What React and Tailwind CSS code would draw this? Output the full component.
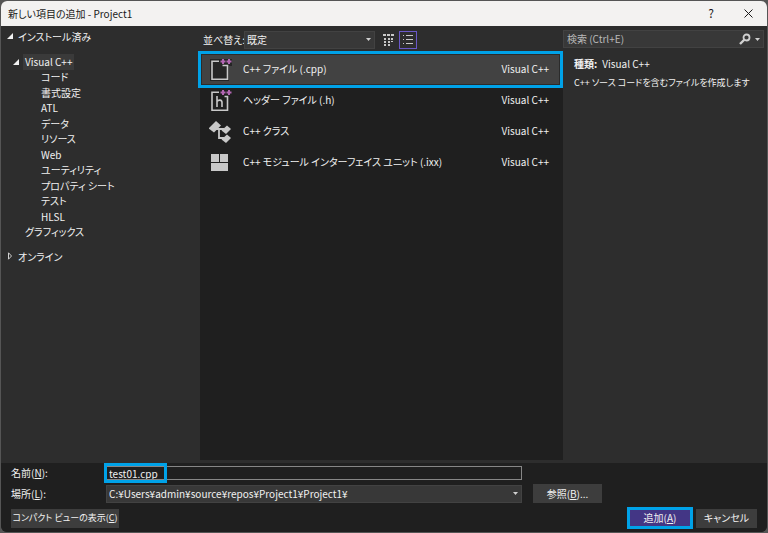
import React, { useState } from 'react'
import clsx from 'clsx'

const categories = [
    'コード',
    '書式設定',
    'ATL',
    'データ',
    'リソース',
    'Web',
    'ユーティリティ',
    'プロパティ シート',
    'テスト',
    'HLSL',
]

const templates = [
    { id: 'cpp', label: 'C++ ファイル (.cpp)', lang: 'Visual C++', icon: CppFileIcon },
    { id: 'header', label: 'ヘッダー ファイル (.h)', lang: 'Visual C++', icon: HeaderFileIcon },
    { id: 'class', label: 'C++ クラス', lang: 'Visual C++', icon: ClassIcon },
    { id: 'module', label: 'C++ モジュール インターフェイス ユニット (.ixx)', lang: 'Visual C++', icon: ModuleIcon },
]

function PlusPlus() {
    return (
        <path d="M11.5 3.5h5M14 1v5M17.5 3.5h5M20 1v5" stroke="#b266b2" strokeWidth="2" />
    )
}

function CppFileIcon() {
    return (
        <svg viewBox="0 0 24 24" className="size-6" fill="none">
            <path d="M1 1H23V8H20V23H1Z" fill="#252525" />
            <path d="M10 3.2H3V21.2H18.5V7.5H13.5" stroke="#c8c8c8" strokeWidth="1.6" />
            <PlusPlus />
        </svg>
    )
}

function HeaderFileIcon() {
    return (
        <svg viewBox="0 0 24 24" className="size-6" fill="none">
            <path d="M10 3.2H3V21.2H18.5V7.5H15.5" stroke="#c8c8c8" strokeWidth="1.6" />
            <path d="M8 7V18M8 12.5C9.5 10.5 13 10.5 13 13.5V18" stroke="#c8c8c8" strokeWidth="1.6" />
            <PlusPlus />
        </svg>
    )
}

function ClassIcon() {
    return (
        <svg viewBox="0 0 24 24" className="size-6">
            <path d="M-0.5 8.5L7 1L12 5.5L5 12.5Z" fill="#c8c8c8" />
            <path d="M12.5 10.5L18 5.5L22 9L17 14Z" fill="#c8c8c8" />
            <path d="M12.5 19.5L18 14.5L22 18L17 23Z" fill="#c8c8c8" />
            <path d="M7 9H15M10 9V18H15" fill="none" stroke="#c8c8c8" strokeWidth="1.8" />
        </svg>
    )
}

function ModuleIcon() {
    return (
        <svg viewBox="0 0 24 24" className="size-6" fill="#c8c8c8">
            <rect x="2" y="3" width="8" height="8" />
            <rect x="11" y="3" width="8" height="8" />
            <rect x="2" y="12" width="17" height="8" />
        </svg>
    )
}

function GridViewIcon() {
    return (
        <svg viewBox="0 0 12 12" className="size-3" fill="#c8c8c8">
            <path d="M0 0h3v2H0zM4 0h3v2H4zM8 0h3v2H8zM1 4h2v2H1zM5 4h2v2H5zM8 4h2v2H8zM1 7h2v2H1zM5 7h2v2H5zM1 10h2v2H1zM5 10h2v2H5zM8 7h2v1H8z" />
        </svg>
    )
}

function ListViewIcon() {
    return (
        <svg viewBox="0 0 10 9" className="w-2.5 h-[9px]" fill="#c8c8c8">
            <path d="M0 0h1v1H0zM3 0h7v1H3zM0 4h1v1H0zM3 4h7v1H3zM0 8h1v1H0zM3 8h7v1H3z" />
        </svg>
    )
}

function SearchIcon() {
    return (
        <svg viewBox="0 0 12 12" className="size-3" fill="none" stroke="#d0d0d0">
            <circle cx="7.5" cy="4.5" r="3" strokeWidth="1.8" />
            <path d="M5.5 6.5L1 11" strokeWidth="2.4" />
        </svg>
    )
}

function DownArrow({ className }) {
    return (
        <svg viewBox="0 0 5 3" className={clsx('w-[5px] h-[3px]', className)} fill="#d0d0d0">
            <path d="M0 0H5L2.5 3Z" />
        </svg>
    )
}

function TreeArrow({ open }) {
    return (
        <svg viewBox="0 0 8 8" className="size-2 shrink-0">
            {open
                ? <path d="M7 1V7H1Z" fill="#f1f1f1" />
                : <path d="M2.5 0.8V7.2L5.5 4Z" fill="none" stroke="#d0d0d0" />}
        </svg>
    )
}

// Drop-down with its own arrow
function Dropdown({ id, options, className }) {
    return (
        <div className={clsx('relative', className)}>
            <select id={id} className="block w-full h-[18px] appearance-none bg-[#383838] border border-[#424242] pl-0.5 pr-4 pb-px leading-4">
                {options.map((o) => <option key={o}>{o}</option>)}
            </select>
            <DownArrow className="absolute right-1 top-[7px] pointer-events-none" />
        </div>
    )
}

function Sidebar() {
    return (
        <nav className="pl-[5px] pt-0.5">
            <button className="flex items-center gap-1 h-4">
                <TreeArrow open /> インストール済み
            </button>
            <ul className="grid grid-rows-12 h-[186px] mt-[10px] ml-[6px] items-center">
                <li className="flex items-center gap-[3px]">
                    <TreeArrow open />
                    <button className="h-4 leading-4 px-0.5 bg-[#3a3a3a]">Visual C++</button>
                </li>
                {categories.map((c) => (
                    <li key={c} className="flex pl-[29px]">
                        <button className="leading-4">{c}</button>
                    </li>
                ))}
                <li className="flex pl-[13px]">
                    <button className="leading-4">グラフィックス</button>
                </li>
            </ul>
            <button className="flex items-center gap-1 h-4 mt-2">
                <TreeArrow /> オンライン
            </button>
        </nav>
    )
}

function TemplateList() {
    const [selected, setSelected] = useState('cpp')

    return (
        <section className="flex flex-col min-w-0">
            <div className="flex items-center h-[27px] mb-px pl-[3px]">
                <label htmlFor="sort" className="w-[41px] whitespace-nowrap">並べ替え:</label>
                <Dropdown id="sort" options={['既定']} className="w-[131px]" />
                <button aria-label="小さいアイコン" className="ml-2 size-3"><GridViewIcon /></button>
                <button aria-label="一覧" className="ml-1 size-[18px] flex items-center justify-center border border-[#6a58c8]">
                    <ListViewIcon />
                </button>
            </div>
            <ul className="flex-1 pl-px pr-[3px] bg-[#1f1f1f]">
                {templates.map(({ id, label, lang, icon: Icon }) => (
                    <li key={id}>
                        <button
                            onClick={() => setSelected(id)}
                            className={clsx(
                                'flex items-center w-full h-[31px] pl-[7px] pr-2.5 text-left border',
                                selected === id
                                    ? 'relative bg-[#424242] border-[#2b2b2b] outline-3 outline-[#00a2e8]'
                                    : 'border-transparent'
                            )}
                        >
                            <Icon />
                            <span className="flex-1 ml-[10px] pb-0.5">{label}</span>
                            <span className="pb-0.5">{lang}</span>
                        </button>
                    </li>
                ))}
            </ul>
        </section>
    )
}

function Details() {
    return (
        <aside className="pt-1 pr-[3px]">
            <div className="flex items-center h-[18px] px-[3px] bg-[#383838] border border-[#424242]">
                <input type="search" aria-label="検索" placeholder="検索 (Ctrl+E)" className="flex-1 min-w-0 leading-4 placeholder:text-[#b8b8b8]" />
                <button aria-label="検索"><SearchIcon /></button>
                <button aria-label="検索オプション" className="ml-1"><DownArrow /></button>
            </div>
            <div className="pl-[11px] pt-2 leading-4">
                <p><b>種類:</b><span className="ml-[5px]">Visual C++</span></p>
                <p className="mt-[3px] text-[9px]">C++ ソース コードを含むファイルを作成します</p>
            </div>
        </aside>
    )
}

function Footer() {
    const [name, setName] = useState('test01.cpp')

    return (
        <footer className="bg-[#1f1f1f] px-[10px] pt-0.5 pb-[3px]">
            <div className="grid grid-cols-[95px_1fr_80px_155px] gap-y-[3px] items-center">
                <label htmlFor="name" className="leading-4">名前(<u>N</u>):</label>
                <div className="relative">
                    <input
                        id="name"
                        value={name}
                        onChange={(e) => setName(e.target.value)}
                        className="block w-full h-[14px] border border-[#868686] pl-0.5 leading-3 outline-none"
                    />
                    {/* highlight round the file name */}
                    <div className="absolute -left-0.5 -top-[3px] w-[63px] h-5 border-3 border-[#00a2e8] pointer-events-none" />
                </div>
                <span className="col-span-2" />
                <label htmlFor="place" className="leading-4">場所(<u>L</u>):</label>
                <Dropdown id="place" options={['C:¥Users¥admin¥source¥repos¥Project1¥Project1¥']} />
                <button className="ml-[11px] h-[19px] pb-px bg-[#3d3d3d]">参照(<u>B</u>)...</button>
            </div>
            <div className="flex items-center gap-[3px] mt-1">
                <button className="w-[108px] h-[19px] pb-px bg-[#3d3d3d] text-[9px] whitespace-nowrap">コンパクト ビューの表示(<u>C</u>)</button>
                <button className="ml-auto w-[66px] h-[22px] pb-px bg-[#433685] border-3 border-[#00a2e8] leading-4">追加(<u>A</u>)</button>
                <button className="w-[61px] h-[19px] pb-px bg-[#3d3d3d]">キャンセル</button>
            </div>
        </footer>
    )
}

export default function App() {
    return (
        <div className="min-h-screen flex flex-col p-px bg-[#555555] text-[10px] text-[#f1f1f1] font-['Noto_Sans_CJK_JP',sans-serif] [font-feature-settings:'palt']">
            <div className="flex-1 flex flex-col rounded-md overflow-hidden bg-[#2d2d2d]">
                <header className="flex items-center h-[25px] pl-[7px] pr-[14px] pb-px bg-[#f3f2f1] text-[#1a1a1a]">
                    <h1 className="flex-1">新しい項目の追加 - Project1</h1>
                    <button aria-label="ヘルプ" className="mr-[30px] text-xs">?</button>
                    <button aria-label="閉じる">
                        <svg viewBox="0 0 9 9" className="size-[9px]" stroke="#1a1a1a">
                            <path d="M0.5 0.5L8.5 8.5M8.5 0.5L0.5 8.5" />
                        </svg>
                    </button>
                </header>
                <main className="flex-1 grid grid-cols-[199px_1fr_204px] pb-[3px]">
                    <Sidebar />
                    <TemplateList />
                    <Details />
                </main>
                <Footer />
            </div>
        </div>
    )
}
